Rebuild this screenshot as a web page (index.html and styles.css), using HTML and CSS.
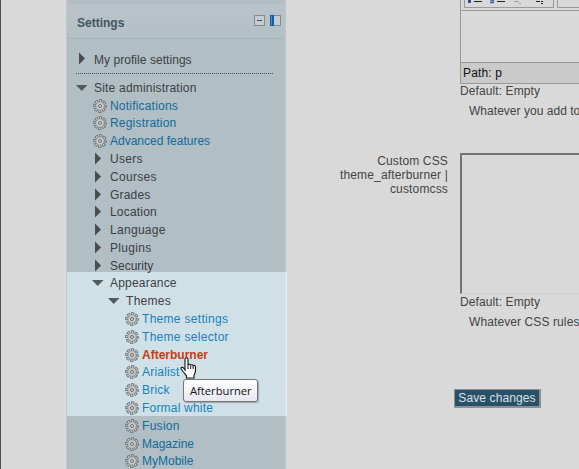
FILE: index.html
```html
<!DOCTYPE html>
<html lang="en">
<head>
<meta charset="utf-8">
<title>Settings</title>
<link rel="stylesheet" href="styles.css">
</head>
<body>
<svg width="0" height="0" class="defs">
  <symbol id="gear" viewBox="0 0 14 14">
    <circle cx="7" cy="7" r="5.200" fill="none" stroke="#63686a" stroke-width="3.200" stroke-dasharray="3 1.084" stroke-dashoffset="1.500"/>
    <circle cx="7" cy="7" r="5.200" fill="none" stroke="#ccd0d1" stroke-width="1.700" stroke-dasharray="1.500 2.584" stroke-dashoffset=".75"/>
    <circle cx="7" cy="7" r="4.200" fill="#c8cbcb" stroke="#7c8183" stroke-width=".6"/>
    <circle cx="7" cy="7" r="1.500" fill="#dde1e2" stroke="#676b6d" stroke-width="1"/>
  </symbol>
  <symbol id="right" viewBox="0 0 14 14"><path d="M2 .5l6 6-6 6z" fill="#464d50"/></symbol>
  <symbol id="down" viewBox="0 0 14 14"><path d="M-1 4h11.500L4.700 10z" fill="#505b5f"/></symbol>
</svg>
<div class="page">
  <aside class="sidebar">
    <div class="spotlight"></div>
    <header class="block-head">
      <h2>Settings</h2>
      <svg class="tools" width="28" height="12" viewBox="0 0 28 12">
        <rect x=".5" y=".5" width="10" height="10" fill="#c3ccd0" stroke="#858c90"/>
        <path d="M3 5.500h5" stroke="#3c5460"/>
        <rect x="16.500" y=".5" width="10" height="10" fill="#c6cdd0" stroke="#858c90"/>
        <path d="M16 0h4v11h-4z" fill="#105fa5"/><path d="M17.500 1v9" stroke="#7398b8" stroke-width=".7"/>
      </svg>
    </header>
    <div class="profile"><svg class="icon"><use href="#right"/></svg><span>My profile settings</span></div>
    <ul class="tree">
      <li class="d1"><svg class="icon"><use href="#down"/></svg><span>Site administration</span></li>
      <li class="d2"><svg class="icon"><use href="#gear"/></svg><a>Notifications</a></li>
      <li class="d2"><svg class="icon"><use href="#gear"/></svg><a>Registration</a></li>
      <li class="d2"><svg class="icon"><use href="#gear"/></svg><a class="tight">Advanced features</a></li>
      <li class="d2"><svg class="icon"><use href="#right"/></svg><span class="wide">Users</span></li>
      <li class="d2"><svg class="icon"><use href="#right"/></svg><span class="wide">Courses</span></li>
      <li class="d2"><svg class="icon"><use href="#right"/></svg><span>Grades</span></li>
      <li class="d2"><svg class="icon"><use href="#right"/></svg><span>Location</span></li>
      <li class="d2"><svg class="icon"><use href="#right"/></svg><span class="wide">Language</span></li>
      <li class="d2"><svg class="icon"><use href="#right"/></svg><span class="wide">Plugins</span></li>
      <li class="d2"><svg class="icon"><use href="#right"/></svg><span class="tight">Security</span></li>
      <li class="d2"><svg class="icon"><use href="#down"/></svg><span>Appearance</span></li>
      <li class="d3"><svg class="icon"><use href="#down"/></svg><span class="wide">Themes</span></li>
      <li class="d4 lit"><svg class="icon"><use href="#gear"/></svg><a class="wide">Theme settings</a></li>
      <li class="d4 lit"><svg class="icon"><use href="#gear"/></svg><a class="wide">Theme selector</a></li>
      <li class="d4 hover"><svg class="icon"><use href="#gear"/></svg><a>Afterburner</a></li>
      <li class="d4 lit"><svg class="icon"><use href="#gear"/></svg><a>Arialist</a></li>
      <li class="d4 lit"><svg class="icon"><use href="#gear"/></svg><a>Brick</a></li>
      <li class="d4 lit"><svg class="icon"><use href="#gear"/></svg><a>Formal white</a></li>
      <li class="d4"><svg class="icon"><use href="#gear"/></svg><a class="wide">Fusion</a></li>
      <li class="d4"><svg class="icon"><use href="#gear"/></svg><a class="tight">Magazine</a></li>
      <li class="d4"><svg class="icon"><use href="#gear"/></svg><a class="tight">MyMobile</a></li>
    </ul>
    <svg class="cursor" width="17" height="22" viewBox="0 0 17 22"><path d="M5 13V2.200C5 .3 8 .3 8 2.200V8c.3-1.200 2.700-1 2.700.4.400-1 2.500-.8 2.500.5.500-.8 2.300-.4 2.300 1V14c0 2-1.300 3-1.500 4.500V21H6.500v-2.200L3 14.500 1.200 12c-.8-1.500 1.200-2.300 2.300-1z" fill="#fff" stroke="#111" stroke-width="1.100"/><path d="M8 8v4M10.700 8.500V12M13.200 9.500V12" stroke="#222"/></svg>
    <div class="tooltip">Afterburner</div>
  </aside>
  <main class="form">
    <section class="setting first">
      <div class="label"></div>
      <div class="field">
        <div class="editor">
          <div class="toolbar">
            <svg width="119" height="11" viewBox="0 0 119 11">
              <path d="M3.500 0v7.500h89V0M96.500 0v7.500H119" fill="none" stroke="#999"/>
              <path d="M7 0h3v3H7z" fill="#354b91"/><path d="M13 1.500h8M36 1.500h8" stroke="#222"/><path d="M29 0h3v2.500h-3" fill="none" stroke="#3a56a0" stroke-width="1.500"/>
              <path d="M53 1.500h5M58 3.500h2" stroke="#999"/><path d="M75 1.500h4M80 1.500h2M80 3.500h2" stroke="#222"/>
            </svg>
          </div>
          <div class="canvas"></div>
          <div class="path">Path: p</div>
        </div>
        <div class="default">Default: Empty</div>
        <p class="first-help">Whatever you add to</p>
      </div>
    </section>
    <section class="setting second">
      <div class="label">Custom CSS<br>theme_afterburner |<br>customcss</div>
      <div class="field">
        <div class="area"></div>
        <div class="default">Default: Empty</div>
        <p>Whatever CSS rules</p>
      </div>
    </section>
    <button class="save">Save changes</button>
  </main>
</div>
</body>
</html>
```
FILE: styles.css
```css
* { box-sizing: border-box; }
body { margin: 0; width: 579px; height: 469px; overflow: hidden; background: #d9d9d9; color: #3b4043; font: 12px/14px "Liberation Sans", Arial, sans-serif; letter-spacing: .2px; }
.defs { position: absolute; }
.page { display: flex; height: 469px; border-left: 1px solid #4c4c4c; padding-left: 65px; overflow: hidden; }
.sidebar { position: relative; isolation: isolate; flex: none; width: 220px; background: #b1bec4; border-left: 1px solid #bdc9ce; border-right: 2px solid #b9c3c9; padding-top: 4px; white-space: nowrap; }
.block-head { display: flex; align-items: center; justify-content: space-between; height: 35px; padding: 0 2px 0 10px; border-bottom: 1px solid #a4b4ba; background: linear-gradient(#bbc3ca, #b2c0c6); }
.block-head h2 { margin: 3px 0 0; font-size: 12px; line-height: 14px; color: #42545e; letter-spacing: 0; }
.profile { display: flex; height: 35px; margin: 0 11px 0 9px; padding: 14px 0 0 1px; border-bottom: 1px dotted #4b5357; letter-spacing: .05px; }
.icon { flex: none; width: 14px; height: 14px; margin-right: 3px; overflow: visible; }
symbol { overflow: visible; }
.profile .icon { margin-top: -1px; }
.tree { list-style: none; margin: 5px 0 0; padding: 0; }
.tree li { display: flex; align-items: center; height: 17.79px; }
.wide { letter-spacing: .3px; }
.tight { letter-spacing: 0; }
.d1 { padding-left: 10px; }
.d2 { padding-left: 26px; }
.d3 { padding-left: 42px; }
.d4 { padding-left: 58px; }
.tree a { color: #106a99; }
.tree .lit a { color: #1681bb; }
.tree .hover a { color: #c63c12; font-weight: bold; letter-spacing: 0; }
.spotlight { position: absolute; z-index: -1; left: 0; top: 272px; width: 220px; height: 144px; background: #d0e0e7; border-right: 1px solid #e4edf2; }
.cursor { position: absolute; left: 113px; top: 357px; }
.tooltip { position: absolute; left: 116px; top: 379px; width: 75px; height: 23px; padding-left: 6px; border: 1px solid #777; border-radius: 3px; background: linear-gradient(#fff, #e6e7f1); color: #111; font: 11.2px/22px "Open Sans", sans-serif; letter-spacing: 0; box-shadow: 1px 1px 1px #9aa5ab; }
.form { flex: none; width: 293px; color: #444; }
.setting { display: flex; gap: 12px; }
.label { flex: none; width: 162px; text-align: right; letter-spacing: .15px; }
.field { flex: none; width: 150px; white-space: nowrap; letter-spacing: .1px; }
.first { height: 153px; }
.second { height: 236px; }
.editor { border: 1px solid #999; border-top: 0; height: 84px; }
.toolbar { height: 11px; border-bottom: 1px solid #999; overflow: hidden; }
.toolbar svg { display: block; }
.canvas { height: 51px; }
.path { height: 21px; border-top: 1px solid #999; background: #cacaca; padding: 3px 2px; color: #111; letter-spacing: .15px; }
.default { line-height: 14px; }
.field p { margin: 6px 0 0 9px; }
.field .first-help { letter-spacing: .03px; }
.area { height: 141px; margin-bottom: 1px; border: 2px solid #747474; border-bottom: 1px solid #d0d0d0; }
.second .label { padding-top: 1px; }
.save { display: block; margin: 0 0 0 168px; width: 87px; height: 19px; padding: 0; border: 1px solid #8b9296; border-width: 1px 2px 2px 1px; background: #285169; color: #dce1e4; font: inherit; letter-spacing: .1px; }
```
